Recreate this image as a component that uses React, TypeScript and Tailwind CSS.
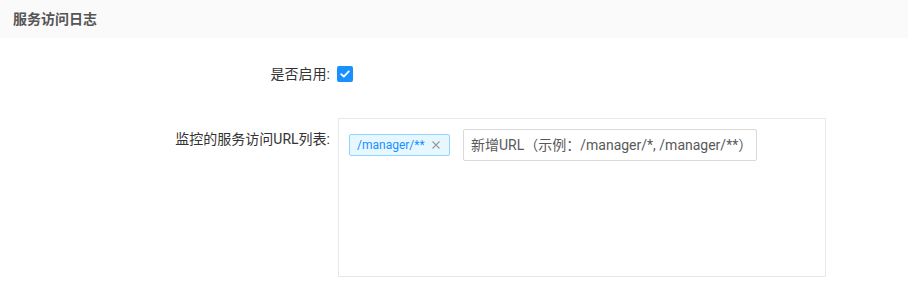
import React from "react";

export default function App() {
  const font = { fontFamily: 'Roboto, "Noto Sans CJK SC", sans-serif' };
  return (
    <div className="w-[908px] h-[295px] bg-white" style={font}>
      <div className="h-[38px] bg-[#fafafa] flex items-center px-[13px]">
        <span className="text-[14px] font-bold text-[#555555]">服务访问日志</span>
      </div>
      <div className="flex items-center mt-[28px] h-[16px]">
        <div className="w-[330px] text-right text-[14px] leading-[22px] text-[#333333]">是否启用:</div>
        <div className="ml-[7px] w-[16px] h-[16px] rounded-[2px] bg-[#1890ff] flex items-center justify-center">
          <svg width="10" height="8" viewBox="0 0 10 8">
            <path d="M1.2 4.2 L3.8 6.6 L8.8 1.4" fill="none" stroke="white" strokeWidth="1.8" strokeLinecap="round" strokeLinejoin="round" />
          </svg>
        </div>
      </div>
      <div className="flex mt-[36px]">
        <div className="w-[330px] text-right text-[14px] leading-[22px] text-[#333333] pt-[10px]">监控的服务访问URL列表:</div>
        <div className="ml-[8px] w-[488px] h-[159px] border border-[#e8e8e8] pl-[10px] pt-[10px]">
          <div className="flex items-center">
            <div className="h-[22px] w-[101px] border border-[#91d5ff] bg-[#e6f7ff] rounded-[2px] flex items-center pl-[7px] pr-[9px] justify-between">
              <span className="text-[12px] text-[#1890ff]">/manager/**</span>
              <svg width="8" height="8" viewBox="0 0 8 8">
                <path d="M0.5 0.5 L7.5 7.5 M7.5 0.5 L0.5 7.5" stroke="#999999" strokeWidth="1.1" />
              </svg>
            </div>
            <div className="ml-[13px] w-[294px] h-[32px] border border-[#d9d9d9] rounded-[2px] flex items-center pl-[7px] text-[14px] text-[#595959] whitespace-nowrap overflow-hidden">
              新增URL（示例：/manager/*, /manager/**）
            </div>
          </div>
        </div>
      </div>
    </div>
  );
}
